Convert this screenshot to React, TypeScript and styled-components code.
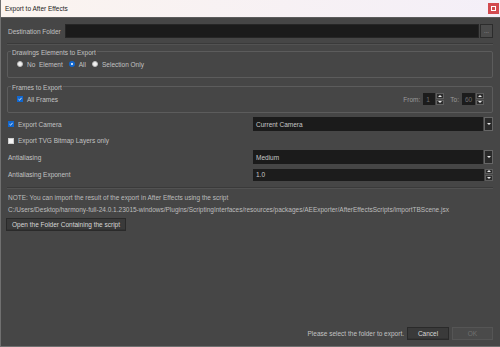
import React from 'react'
import styled, { createGlobalStyle } from 'styled-components'

const GlobalStyle = createGlobalStyle`
  html, body {
    margin: 0;
    padding: 0;
    background: #464646;
  }
  body {
    font-family: "Liberation Sans", Arial, sans-serif;
    font-size: 6.5px;
  }
`

const Window = styled.div`
  width: 500px;
  height: 347px;
  box-sizing: border-box;
  display: flex;
  flex-direction: column;
  background: #464646;
  border-left: 1px solid #707070;
  border-bottom: 1px solid #707070;
  color: #c2c2c2;
  overflow: hidden;
`

const TitleBar = styled.div`
  flex: none;
  height: 18px;
  box-sizing: border-box;
  display: flex;
  align-items: center;
  justify-content: space-between;
  padding: 0 1px 1px 4px;
  background: linear-gradient(90deg, #fbf4ef, #f4eff8);
  border-bottom: 1px solid #5c5c5c;
  color: #1b1b1b;
`

const CloseButton = styled.div`
  width: 11px;
  height: 11px;
  display: flex;
  align-items: center;
  justify-content: center;
  background: #d24a50;
  svg {
    display: block;
  }
`

const Body = styled.div`
  flex: 1;
  display: flex;
  flex-direction: column;
  padding: 0 7px 0 6px;
`

const DestRow = styled.div`
  display: flex;
  align-items: center;
  height: 14px;
  margin: 6px 0 0 1px;
`

const Label = styled.span<{ $width?: number; $dim?: boolean }>`
  flex: none;
  width: ${p => (p.$width ? `${p.$width}px` : 'auto')};
  color: ${p => (p.$dim ? '#9a9a9a' : '#c2c2c2')};
  white-space: pre;
  line-height: 9px;
`

const TextField = styled.div`
  flex: 1;
  height: 14px;
  box-sizing: border-box;
  display: flex;
  align-items: center;
  padding-left: 3px;
  background: #1b1b1b;
  border: 1px solid #262626;
  color: #c8c8c8;
`

const DotsButton = styled.div`
  flex: none;
  width: 13px;
  height: 14px;
  margin-left: 1px;
  box-sizing: border-box;
  display: flex;
  align-items: center;
  justify-content: center;
  background: #4b4b4b;
  border: 1px solid #2c2c2c;
  color: #aaaaaa;
  font-size: 6px;
  line-height: 6px;
`

const Separator = styled.div<{ $top: number }>`
  height: 1px;
  margin-top: ${p => p.$top}px;
  background: #3a3a3a;
  border-bottom: 1px solid #525252;
`

const Group = styled.div<{ $top: number }>`
  margin-top: ${p => p.$top}px;
  border: 1px solid #5c5c5c;
  border-radius: 2px;
  display: flex;
  flex-direction: column;
  padding-bottom: 7px;
`

const GroupTitle = styled.div`
  align-self: flex-start;
  margin: -3px 0 0 3px;
  padding: 0 1px;
  height: 8px;
  line-height: 8px;
  background: #464646;
  color: #c2c2c2;
`

const OptionRow = styled.div<{ $top: number }>`
  display: flex;
  align-items: center;
  gap: 6px;
  height: 12px;
  margin-top: ${p => p.$top}px;
  padding: 0 8px 0 9px;
`

const Option = styled.label`
  display: flex;
  align-items: center;
  gap: 4px;
`

const RadioDot = styled.span<{ $on?: boolean }>`
  flex: none;
  width: 6px;
  height: 6px;
  box-sizing: border-box;
  border-radius: 50%;
  background: ${p => (p.$on ? '#ffffff' : '#f2f2f2')};
  border: ${p => (p.$on ? '2px solid #1167cf' : '1px solid #bdbdbd')};
`

const Box = styled.span<{ $on?: boolean }>`
  flex: none;
  width: 6px;
  height: 6px;
  box-sizing: border-box;
  display: flex;
  align-items: center;
  justify-content: center;
  background: ${p => (p.$on ? '#1167cf' : '#f4f4f4')};
  border: 1px solid ${p => (p.$on ? '#1167cf' : '#cfcfcf')};
  svg {
    display: block;
  }
`

const Spacer = styled.div`
  flex: 1;
`

const SpinGroup = styled.div`
  display: flex;
  align-items: center;
  gap: 3px;
`

const SpinBox = styled.div<{ $width: number }>`
  display: flex;
  height: 12px;
  width: ${p => p.$width}px;
`

const SpinValue = styled.div<{ $dim?: boolean }>`
  flex: 1;
  box-sizing: border-box;
  display: flex;
  align-items: center;
  padding-left: 3px;
  background: #1c1c1c;
  color: ${p => (p.$dim ? '#6f6f6f' : '#c8c8c8')};
`

const Arrows = styled.div`
  flex: none;
  width: 8px;
  margin-left: 1px;
  display: flex;
  flex-direction: column;
  gap: 1px;
`

const ArrowButton = styled.div`
  flex: 1;
  display: flex;
  align-items: center;
  justify-content: center;
  background: #2c2c2c;
  border: 1px solid #5e5e5e;
  svg {
    display: block;
  }
`

const Form = styled.div`
  display: grid;
  grid-template-columns: 245px 1fr;
  grid-template-rows: 14px 13px 14px 15px;
  row-gap: 3px;
  margin: 4px 0 0 1px;
  align-items: center;
`

const CheckLine = styled.label`
  display: flex;
  align-items: center;
  gap: 4px;
`

const Combo = styled.div`
  display: flex;
  height: 14px;
`

const ComboValue = styled.div`
  flex: 1;
  display: flex;
  align-items: center;
  padding-left: 3px;
  background: #1b1b1b;
  color: #c8c8c8;
`

const DropButton = styled.div`
  flex: none;
  width: 7px;
  margin-left: 1px;
  display: flex;
  align-items: center;
  justify-content: center;
  background: #2a2a2a;
  border: 1px solid #666666;
  svg {
    display: block;
  }
`

const Note = styled.div<{ $top: number }>`
  margin: ${p => p.$top}px 0 0 1px;
  line-height: 9px;
  color: #bdbdbd;
  white-space: nowrap;
`

const PushButton = styled.div<{ $width?: number; $disabled?: boolean }>`
  height: 13px;
  box-sizing: border-box;
  width: ${p => (p.$width ? `${p.$width}px` : 'auto')};
  padding: 0 ${p => (p.$width ? 0 : 5)}px;
  display: flex;
  align-items: center;
  justify-content: center;
  background: ${p => (p.$disabled ? '#4a4a4a' : '#3a3a3a')};
  border: 1px solid ${p => (p.$disabled ? '#555555' : '#2a2a2a')};
  box-shadow: ${p => (p.$disabled ? 'none' : 'inset 0 -1px 0 #333333')};
  color: ${p => (p.$disabled ? '#707070' : '#d8d8d8')};
  white-space: nowrap;
`

const FolderButton = styled(PushButton)`
  align-self: flex-start;
  margin: 4px 0 0 -1px;
`

const Footer = styled.div`
  display: flex;
  align-items: center;
  justify-content: flex-end;
  gap: 3px;
  margin-bottom: 6px;
`

const Check = () => (
  <svg width="4" height="4" viewBox="0 0 4 4">
    <path d="M0.5 2.2 L1.6 3.2 L3.6 0.8" fill="none" stroke="#ffffff" strokeWidth="0.8" />
  </svg>
)

const Tri = ({ up }: { up?: boolean }) => (
  <svg width="4" height="2" viewBox="0 0 4 2">
    <path d={up ? 'M0 2 L2 0 L4 2 Z' : 'M0 0 L4 0 L2 2 Z'} fill="#e6e6e6" />
  </svg>
)

const Spin = ({ value, width, dim }: { value: string; width: number; dim?: boolean }) => (
  <SpinBox $width={width}>
    <SpinValue $dim={dim}>{value}</SpinValue>
    <Arrows>
      <ArrowButton>
        <Tri up />
      </ArrowButton>
      <ArrowButton>
        <Tri />
      </ArrowButton>
    </Arrows>
  </SpinBox>
)

const Dropdown = ({ value }: { value: string }) => (
  <Combo>
    <ComboValue>{value}</ComboValue>
    <DropButton>
      <Tri />
    </DropButton>
  </Combo>
)

export default function App() {
  return (
    <>
      <GlobalStyle />
      <Window>
        <TitleBar>
          <span>Export to After Effects</span>
          <CloseButton>
            <svg width="5" height="5" viewBox="0 0 5 5">
              <rect x="0.5" y="0.5" width="4" height="4" fill="none" stroke="#ffffff" strokeWidth="1" />
            </svg>
          </CloseButton>
        </TitleBar>
        <Body>
          <DestRow>
            <Label $width={57}>Destination Folder</Label>
            <TextField />
            <DotsButton>...</DotsButton>
          </DestRow>
          <Separator $top={5} />

          <Group $top={6}>
            <GroupTitle>Drawings Elements to Export</GroupTitle>
            <OptionRow $top={1}>
              <Option>
                <RadioDot />
                <Label>No  Element</Label>
              </Option>
              <Option>
                <RadioDot $on />
                <Label>All</Label>
              </Option>
              <Option>
                <RadioDot />
                <Label>Selection Only</Label>
              </Option>
            </OptionRow>
          </Group>

          <Group $top={8}>
            <GroupTitle>Frames to Export</GroupTitle>
            <OptionRow $top={1}>
              <Option>
                <Box $on>
                  <Check />
                </Box>
                <Label>All Frames</Label>
              </Option>
              <Spacer />
              <SpinGroup>
                <Label $dim>From:</Label>
                <Spin value="1" width={21} dim />
              </SpinGroup>
              <SpinGroup>
                <Label $dim>To:</Label>
                <Spin value="60" width={22} dim />
              </SpinGroup>
            </OptionRow>
          </Group>

          <Form>
            <CheckLine>
              <Box $on>
                <Check />
              </Box>
              <Label>Export Camera</Label>
            </CheckLine>
            <Dropdown value="Current Camera" />
            <CheckLine>
              <Box />
              <Label>Export TVG Bitmap Layers only</Label>
            </CheckLine>
            <div />
            <Label>Antialiasing</Label>
            <Dropdown value="Medium" />
            <Label>Antialiasing Exponent</Label>
            <Spin value="1.0" width={240} />
          </Form>

          <Separator $top={5} />
          <Note $top={4}>NOTE: You can import the result of the export in After Effects using the script</Note>
          <Note $top={3}>
            C:/Users/Desktop/harmony-full-24.0.1.23015-windows/Plugins/ScriptingInterfaces/resources/packages/AEExporter/AfterEffectsScripts/importTBScene.jsx
          </Note>
          <FolderButton>Open the Folder Containing the script</FolderButton>
          <Spacer />
          <Footer>
            <Label>Please select the folder to export.</Label>
            <PushButton $width={42}>Cancel</PushButton>
            <PushButton $width={41} $disabled>
              OK
            </PushButton>
          </Footer>
        </Body>
      </Window>
    </>
  )
}
